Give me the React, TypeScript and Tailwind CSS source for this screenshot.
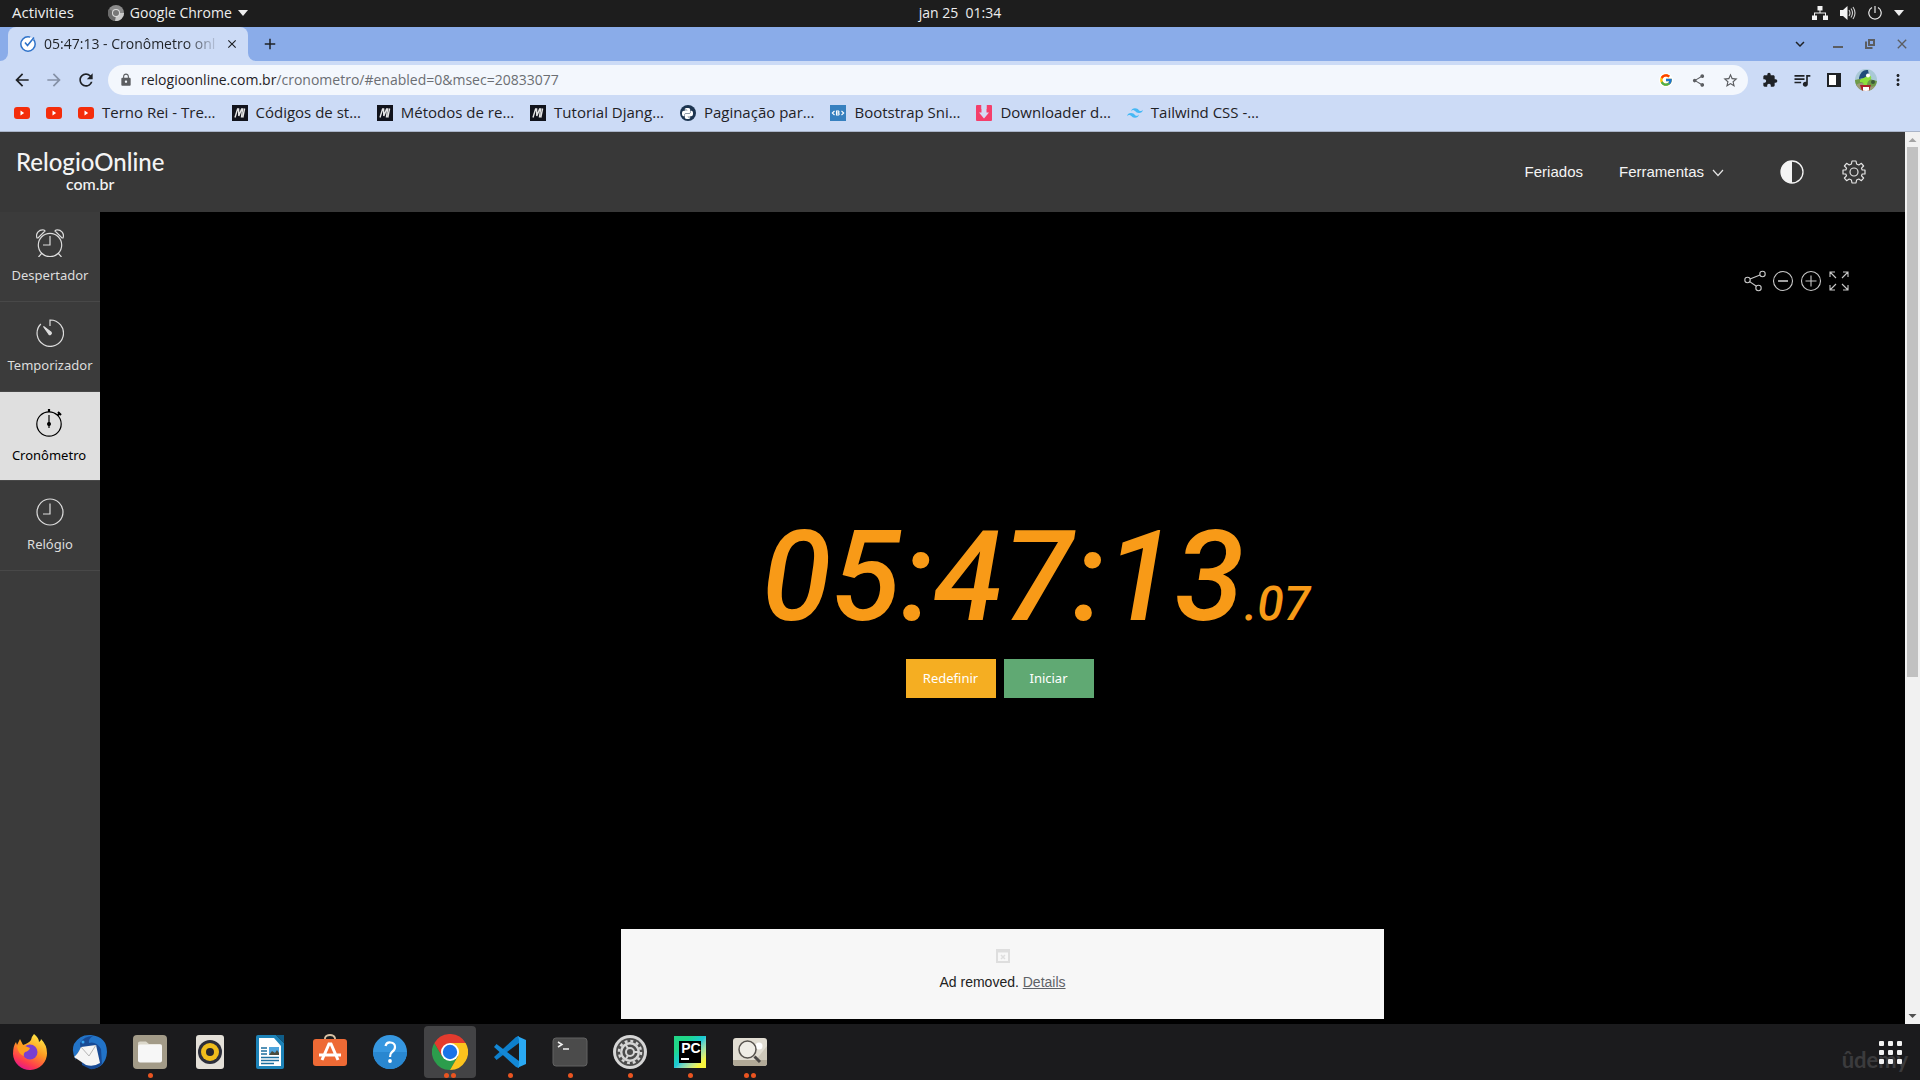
import React from 'react';
import {
  MdLock, MdExtension, MdQueueMusic, MdMoreVert, MdArrowBack, MdArrowForward, MdRefresh,
  MdClose, MdAdd, MdShare, MdStarBorder, MdExpandMore,
} from 'react-icons/md';
import { FcGoogle } from 'react-icons/fc';
import { SiTailwindcss, SiPython } from 'react-icons/si';

const YouTube = () => (
  <svg viewBox="0 0 16 16" className="size-4 shrink-0">
    <rect x="0" y="2" width="16" height="12" rx="3" fill="#f42d0b" />
    <path d="M6.5 5.6 L10.2 8 L6.5 10.4 Z" fill="#fff" />
  </svg>
);

const MIcon = () => (
  <svg viewBox="0 0 16 16" className="size-4 shrink-0">
    <rect width="16" height="16" fill="#11131c" />
    <path d="M3 12.5 L5.6 4 L6.6 4 L6.8 11 L9.6 4 L10.6 4 L9.4 12.5 M12.6 3.5 L10.8 12.5" fill="none" stroke="#e6e6e6" strokeWidth="1.4" />
  </svg>
);

const PyCircle = () => (
  <span className="flex size-4 shrink-0 items-center justify-center rounded-full bg-[#1c3450] text-[11px] text-white">
    <SiPython />
  </span>
);

const Bootsnipp = () => (
  <span className="flex size-4 shrink-0 items-center justify-center bg-[#3680bf]">
    <svg viewBox="0 0 16 16" className="size-4" fill="none" stroke="#fff" strokeWidth="1.1">
      <path d="M4.5 6 L2.300 8 L4.5 10 M11.5 6 L13.700 8 L11.5 10 M6.500 6 H8.5 Q9.600 7 8.300 8 Q10 9 8.5 10 H6.500 Z M6.500 8 H8.5" />
    </svg>
  </span>
);

const Downloader = () => (
  <svg viewBox="0 0 16 16" className="size-4 shrink-0">
    <rect width="16" height="16" rx="1" fill="#f43f6b" />
    <path d="M5.5 0 H10.5 V7.5 H13 L8 13.5 L3 7.5 H5.5 Z" fill="#d5dcf5" />
    <path d="M5.5 0 H10.5 V4 H5.5 Z" fill="#ccdbf6" />
  </svg>
);

const bookmarks: { icon: React.ReactNode; label: string }[] = [
  { icon: <YouTube />, label: '' },
  { icon: <YouTube />, label: '' },
  { icon: <YouTube />, label: 'Terno Rei - Tre…' },
  { icon: <MIcon />, label: 'Códigos de st…' },
  { icon: <MIcon />, label: 'Métodos de re…' },
  { icon: <MIcon />, label: 'Tutorial Djang…' },
  { icon: <PyCircle />, label: 'Paginação par…' },
  { icon: <Bootsnipp />, label: 'Bootstrap Sni…' },
  { icon: <Downloader />, label: 'Downloader d…' },
  { icon: <SiTailwindcss className="size-4 shrink-0 text-[#45b8f5]" />, label: 'Tailwind CSS -…' },
];

function TopBar() {
  return (
    <div className="grid h-[27px] grid-cols-[1fr_auto_1fr] items-center bg-[#1d1d1d] px-3 pb-0.5 text-[14px] text-[#eeeeee]">
      <div className="flex items-center gap-[34px]">
        <button className="text-[15px]">Activities</button>
        <button className="flex items-center gap-1.5">
          <svg viewBox="0 0 16 16" className="size-4">
            <circle cx="8" cy="8" r="8" fill="#8b8b8b" />
            <path d="M8 8 L16 8 A8 8 0 0 1 7 16 Z" fill="#c9c9c9" />
            <path d="M8 8 L1 4 A8 8 0 0 0 7 16 Z" fill="#6b6b6b" />
            <circle cx="8" cy="8" r="4" fill="#ddd" />
            <circle cx="8" cy="8" r="3" fill="#777" />
          </svg>
          Google Chrome
          <svg viewBox="0 0 10 6" className="w-[10px]"><path d="M0 0 H10 L5 6 Z" fill="#eee" /></svg>
        </button>
      </div>
      <button className="whitespace-pre">jan 25  01:34</button>
      <div className="flex items-center justify-end gap-3 pr-1">
        <svg viewBox="0 0 16 14" className="w-4" fill="#f2f2f2">
          <path d="M5.500 0 h5 v4.500 h-2 v2 h5.500 v3 h2 V14 h-5 V9.500 h2 v-2 H3 v2 h2 V14 H0 V9.500 h2 v-3 h5.500 v-2 h-2 Z" />
        </svg>
        <svg viewBox="0 0 16 14" className="w-4">
          <path d="M0 4 h3 L7.500 0 V14 L3 10 H0 Z" fill="#f2f2f2" />
          <path d="M9 4 Q11 7 9 10 M11 2.500 Q14 7 11 11.500 M13 1 Q17 7 13 13" fill="none" stroke="#d0d0d0" strokeWidth="1.100" />
        </svg>
        <svg viewBox="0 0 14 14" className="w-3.5" fill="none" stroke="#e8e8e8" strokeWidth="1.200">
          <path d="M7 0 V7 M4 1.500 A6.200 6.200 0 1 0 10 1.500" />
        </svg>
        <svg viewBox="0 0 10 6" className="w-[10px]"><path d="M0 0 H10 L5 6 Z" fill="#eee" /></svg>
      </div>
    </div>
  );
}

function TabStrip() {
  return (
    <div className="flex h-[34px] items-center bg-[#8aace9] text-[#1f2226]">
      <div className="h-full w-2 bg-[#ccdbf6]"><div className="h-full rounded-br-lg bg-[#8aace9]" /></div>
      <div className="flex h-full w-60 items-center rounded-t-lg bg-[#ccdbf6] pr-2 pl-3">
        <svg viewBox="0 0 16 16" className="size-4 shrink-0">
          <circle cx="8" cy="8" r="7.200" fill="#fff" stroke="#2e72c9" strokeWidth="1.500" strokeDasharray="36 4" />
          <path d="M5 6.500 L7.500 9.500 L14 1.500" fill="none" stroke="#2e72c9" strokeWidth="1.600" />
        </svg>
        <span className="ml-2 flex-1 overflow-hidden mask-r-from-80% mask-r-to-100% pb-0.5 text-[14px] whitespace-nowrap">
          05:47:13 - Cronômetro onl
        </span>
        <button aria-label="Fechar guia" className="ml-1 flex size-4 items-center justify-center"><MdClose className="size-3.5" /></button>
      </div>
      <div className="h-full w-2 bg-[#ccdbf6]"><div className="h-full rounded-bl-lg bg-[#8aace9]" /></div>
      <button aria-label="Nova guia" className="ml-1 flex size-5 items-center justify-center"><MdAdd className="size-[18px]" /></button>
      <div className="ml-auto flex items-center pr-0.5 text-[#5b5d61]">
        <button aria-label="Pesquisar guias" className="mr-1.5 flex w-8 justify-center"><MdExpandMore className="size-[18px] text-[#1f2226]" /></button>
        <button aria-label="Minimizar" className="flex h-4 w-8 items-end justify-center pb-1"><span className="mt-2 h-0.5 w-2.5 bg-[#5b5d61]" /></button>
        <button aria-label="Restaurar" className="flex w-8 justify-center">
          <svg viewBox="0 0 10 10" className="size-2.5" fill="none" stroke="#5b5d61" strokeWidth="2"><path d="M4 1 H9 V6 H4 Z M1 2.500 V9 H7.500" /></svg>
        </button>
        <button aria-label="Fechar" className="flex w-8 justify-center"><MdClose className="size-4" /></button>
      </div>
    </div>
  );
}

function Avatar() {
  return (
    <svg viewBox="0 0 22 22" className="size-[22px] overflow-hidden rounded-full">
      <rect width="22" height="22" fill="#a9c9d6" />
      <path d="M0 11 Q10 8 22 12 V22 H0 Z" fill="#6f9a48" />
      <path d="M1 16 Q6 12 12 16 T22 15 V22 H0 Z" fill="#9c9a78" />
      <path d="M5 11 Q9 7 14 6 Q17 7 16 10 Q12 12 12 16 L8 17 Q10 13 5 13 Z" fill="#8ce03c" />
      <path d="M4 9 Q6 0 13 1 L14 6 Q10 9 4 10 Z" fill="#1f4c7a" />
      <circle cx="13" cy="6.500" r="2" fill="#fff" />
      <circle cx="18" cy="13" r="2" fill="#3c5a3a" />
      <path d="M5 16 h11 l-2 6 h-7 Z" fill="#a9202b" />
      <path d="M8 18 h6 v4 h-6 Z" fill="#fff" />
    </svg>
  );
}

function Toolbar() {
  return (
    <div className="flex h-[34px] items-end bg-[#ccdbf6] pr-1.5 text-[#1f2226]">
      <div className="flex h-[30px] w-full items-center">
        <div className="flex w-[108px] items-center gap-3 pl-3">
          <button aria-label="Voltar"><MdArrowBack className="size-5" /></button>
          <button aria-label="Avançar"><MdArrowForward className="size-5 text-[#8591a6]" /></button>
          <button aria-label="Recarregar"><MdRefresh className="size-5" /></button>
        </div>
        <div className="flex h-[30px] flex-1 items-center rounded-full bg-[#f3f7fd] pr-0.5 pl-[11px] text-[#5b5d61]">
          <MdLock className="size-3.5" />
          <button className="ml-2 flex-1 pb-0.5 text-left text-[14px] whitespace-nowrap text-[#6b6e73]" aria-label="Endereço">
            <span className="text-[#1f2226]">relogioonline.com.br</span>/cronometro/#enabled=0&amp;msec=20833077
          </button>
          <div className="flex items-center">
            <button aria-label="Google" className="flex w-8 justify-center"><span className="rounded-full bg-white"><FcGoogle className="size-3.5" /></span></button>
            <button aria-label="Compartilhar" className="flex w-8 justify-center"><MdShare className="size-[15px]" /></button>
            <button aria-label="Favoritar" className="flex w-8 justify-center"><MdStarBorder className="size-[17px]" /></button>
          </div>
        </div>
        <div className="flex items-center pl-1.5">
          <button aria-label="Extensões" className="flex w-8 justify-center"><MdExtension className="size-4" /></button>
          <button aria-label="Mídia" className="flex w-8 justify-center"><MdQueueMusic className="size-5" /></button>
          <button aria-label="Painel lateral" className="flex w-8 justify-center">
            <svg viewBox="0 0 14 14" className="size-3.5"><path d="M1 1 H13 V13 H1 Z" fill="#fff" stroke="#1f2226" strokeWidth="2" /><path d="M9 1 H13 V13 H9 Z" fill="#1f2226" /></svg>
          </button>
          <button aria-label="Perfil" className="flex w-8 justify-center"><Avatar /></button>
          <button aria-label="Menu" className="flex w-8 justify-center"><MdMoreVert className="size-[18px]" /></button>
        </div>
      </div>
    </div>
  );
}

function Bookmarks() {
  return (
    <nav className="flex h-[37px] items-center gap-4 border-b border-[#a9b4c8] bg-[#ccdbf6] pl-3.5 text-[15px] text-[#1f2226]">
      {bookmarks.map((b, i) => (
        <a key={i} href="#" aria-label={b.label || 'YouTube'} className="flex items-center gap-2 whitespace-nowrap">
          {b.icon}
          {b.label && <span className="pb-0.5">{b.label}</span>}
        </a>
      ))}
    </nav>
  );
}

function SiteHeader() {
  return (
    <header className="flex h-20 items-center justify-between bg-[#383838] pr-[39px] pl-4 text-[#f4f4f4]">
      <a href="#" className="flex flex-col items-center font-['Lato'] font-medium">
        <span className="text-[24px] leading-6">RelogioOnline</span>
        <span className="text-[16px] leading-5">com.br</span>
      </a>
      <nav className="flex items-center font-['Liberation_Sans'] text-[15px]">
        <a href="#">Feriados</a>
        <a href="#" className="ml-9 flex items-center gap-2">
          Ferramentas
          <svg viewBox="0 0 12 12" className="size-3" fill="none" stroke="#e4e4e4" strokeWidth="1.200"><path d="M1 4 L6 9.500 L11 4" /></svg>
        </a>
        <button aria-label="Contraste" className="ml-[56px]">
          <svg viewBox="0 0 24 24" className="size-6"><circle cx="12" cy="12" r="11" fill="none" stroke="#f4f4f4" strokeWidth="1.300" /><path d="M12 1 A11 11 0 0 0 12 23 Z" fill="#f4f4f4" /></svg>
        </button>
        <button aria-label="Configurações" className="ml-[38px]">
          <svg viewBox="0 0 24 24" className="size-6" fill="none" stroke="#e4e4e4" strokeWidth="1.200" strokeLinejoin="round">
            <path d="M10 1 H14 L14.600 4 L16.800 5 L19.400 3.300 L21.600 6 L19.500 8.200 L20.200 10 H23 V14 H20.200 L19.500 15.800 L21.600 18 L19.400 20.700 L16.800 19 L14.600 20 L14 23 H10 L9.400 20 L7.200 19 L4.600 20.700 L2.400 18 L4.500 15.800 L3.800 14 H1 V10 H3.800 L4.500 8.200 L2.400 6 L4.600 3.300 L7.200 5 L9.400 4 Z" />
            <circle cx="12" cy="12" r="4" />
          </svg>
        </button>
      </nav>
    </header>
  );
}

const AlarmIcon = () => (
  <svg viewBox="0 0 28 28" className="size-7" fill="none" stroke="currentColor" strokeWidth="1.200">
    <circle cx="14" cy="16" r="11.700" />
    <path d="M14 7 V16 H7 M1 9 A6 6 0 0 1 8 1 L9 2 L2 9 Z M27 9 A6 6 0 0 0 20 1 L19 2 L26 9 Z M6 24 L2.500 28 M22 24 L25.500 28" />
  </svg>
);
const TimerIcon = () => (
  <svg viewBox="0 0 28 28" className="size-7" fill="none" stroke="currentColor" strokeWidth="1.200">
    <path d="M14 7 V1 A13.200 13.200 0 1 1 4.800 5" />
    <path d="M7.500 7.500 L12.800 15 A1.300 1.300 0 0 0 15 13.200 Z" fill="currentColor" />
  </svg>
);
const StopwatchIcon = () => (
  <svg viewBox="-1 -1 28 28" className="size-7" fill="none" stroke="currentColor" strokeWidth="1.200">
    <circle cx="13" cy="14" r="12.200" />
    <path d="M13 5 V18" />
    <circle cx="13" cy="14" r="1.400" fill="currentColor" />
    <path d="M13 -1 V2" strokeWidth="2.200" />
    <path d="M22 2 L25 5 M21.500 5.500 L23.500 3.500" strokeWidth="2" />
  </svg>
);
const ClockIcon = () => (
  <svg viewBox="0 0 28 28" className="size-7" fill="none" stroke="currentColor" strokeWidth="1.200">
    <circle cx="14" cy="14" r="13" />
    <path d="M14 5.500 V16 H7" />
  </svg>
);

const tools = [
  { label: 'Despertador', icon: <AlarmIcon />, active: false },
  { label: 'Temporizador', icon: <TimerIcon />, active: false },
  { label: 'Cronômetro', icon: <StopwatchIcon />, active: true },
  { label: 'Relógio', icon: <ClockIcon />, active: false },
];

function Sidebar() {
  return (
    <nav className="w-[100px] shrink-0 bg-[#3b3b3b] font-['Noto_Sans'] text-[13px]">
      {tools.map((t) => (
        <a
          key={t.label}
          href="#"
          className={
            t.active
              ? 'flex h-[89px] flex-col items-center gap-2 border-b border-[#484848] bg-[#dfdfdf] pt-[17px] pr-0.5 text-black'
              : 'flex h-[90px] flex-col items-center gap-2 border-b border-[#484848] pt-[17px] text-[#dddddd]'
          }
        >
          {t.icon}
          <span className="leading-5">{t.label}</span>
        </a>
      ))}
    </nav>
  );
}

function Stopwatch() {
  return (
    <main className="flex flex-1 flex-col bg-black">
      <div className="flex justify-end gap-1.5 pt-[58px] pr-[55px] text-[#c8c8c8]">
        <button aria-label="Compartilhar">
          <svg viewBox="0 0 22 22" className="size-[22px]" fill="none" stroke="currentColor" strokeWidth="1.100">
            <circle cx="3.500" cy="10" r="2.700" /><circle cx="18.500" cy="4" r="2.700" /><circle cx="14.500" cy="18" r="2.700" />
            <path d="M6 9 L16 5 M5.600 11.600 L12.400 16.200" />
          </svg>
        </button>
        <button aria-label="Diminuir">
          <svg viewBox="0 0 22 22" className="size-[22px]" fill="none" stroke="currentColor" strokeWidth="1.100"><circle cx="11" cy="11" r="9.500" /><path d="M6 11 H16" strokeWidth="1.600" /></svg>
        </button>
        <button aria-label="Aumentar">
          <svg viewBox="0 0 22 22" className="size-[22px]" fill="none" stroke="currentColor" strokeWidth="1.100"><circle cx="11" cy="11" r="9.500" /><path d="M5.500 11 H16.500 M11 5.500 V16.500" /></svg>
        </button>
        <button aria-label="Tela cheia">
          <svg viewBox="0 0 22 22" className="size-[22px]" fill="none" stroke="currentColor" strokeWidth="1.100">
            <path d="M2 7 V2 H7 M2 2 L8 8 M15 2 H20 V7 M20 2 L14 8 M2 15 V20 H7 M2 20 L8 14 M15 20 H20 V15 M20 20 L14 14" />
          </svg>
        </button>
      </div>
      <div className="mt-[210px] flex items-baseline justify-center pl-[67px] font-['Roboto'] font-medium text-[#f89a17] italic" role="timer">
        <span className="text-[126px] leading-[150px]">05:47:13</span>
        <span className="text-[48px]">.07</span>
      </div>
      <div className="mt-[7px] flex justify-center gap-2 pr-1.5 font-['Noto_Sans'] text-[13px] text-white">
        <button className="h-[39px] w-[90px] bg-[#f5ae22]">Redefinir</button>
        <button className="h-[39px] w-[90px] bg-[#60a973]">Iniciar</button>
      </div>
      <section className="mx-auto mt-auto mb-[5px] flex h-[90px] w-[763px] flex-col items-center bg-[#f7f7f7] pt-5 font-['Liberation_Sans'] text-[14px] text-[#222]">
        <svg viewBox="0 0 14 14" className="size-3.5" fill="none" stroke="#dedede">
          <path d="M1 1 H13 V13 H1 Z" strokeWidth="2" /><path d="M1 2 H13" strokeWidth="3" /><path d="M5 6 L9 10 M9 6 L5 10" strokeWidth="1.500" />
        </svg>
        <p className="mt-[9px] leading-5">Ad removed. <a href="#" className="text-[#5f6368] underline">Details</a></p>
      </section>
    </main>
  );
}

function Scrollbar() {
  return (
    <div className="flex w-[15px] shrink-0 flex-col items-center bg-[#f1f1f1]">
      <svg viewBox="0 0 15 15" className="size-[15px]"><path d="M3.500 10 L7.500 6 L11.500 10 Z" fill="#a3a3a3" /></svg>
      <div className="h-[530px] w-[11px] bg-[#c1c1c1]" />
      <svg viewBox="0 0 15 15" className="mt-auto size-[15px]"><path d="M3.500 5 L7.500 9 L11.500 5 Z" fill="#505050" /></svg>
    </div>
  );
}

const Firefox = () => (
  <svg viewBox="0 0 36 36" className="size-9">
    <defs>
      <linearGradient id="ff" x1="0.800" y1="0" x2="0.300" y2="1"><stop offset="0" stopColor="#fff14a" /><stop offset="0.450" stopColor="#ff9a22" /><stop offset="0.800" stopColor="#ff3b4d" /><stop offset="1" stopColor="#e21590" /></linearGradient>
    </defs>
    <path d="M22 0 Q27 4 27 8 Q29 7 29 5 Q35 11 35 19 A17 16.500 0 0 1 1 20 Q1 12 4 8 L5 11 L8 5 L11 11 Q17 9 19 6 Q20 2 22 0 Z" fill="url(#ff)" />
    <circle cx="18" cy="18" r="7.500" fill="#7a3fd0" />
    <path d="M5 12 Q10 9 13 12 L18 14 Q17 17 13 18 Q11 20 12 22 Q6 20 5 12 Z" fill="#ff9d1f" />
  </svg>
);
const Thunderbird = () => (
  <svg viewBox="0 0 36 36" className="size-9">
    <path d="M2 10 Q8 0 19 1 Q35 3 35 18 Q34 33 20 35 Q32 26 27 13 L8 16 Q4 20 4 26 Q-1 18 2 10 Z" fill="#2273c7" />
    <path d="M8 9 Q12 2 21 2 Q16 5 17 9 Q24 7 29 15 L30 30 Q24 36 18 35 L10 31 Z" fill="#174a95" />
    <path d="M9 13 L24 11 L28 29 Q22 33 14 31 L2 23 Q6 20 9 13 Z" fill="#f5f5f5" />
    <path d="M9 13 L17 22 L24 11" fill="none" stroke="#b5b5b5" />
    <circle cx="11" cy="8" r="1.500" fill="#35a4f0" />
  </svg>
);
const Files = () => (
  <svg viewBox="0 0 36 36" className="size-9">
    <rect x="1" y="1" width="34" height="34" rx="4" fill="#a39b88" />
    <path d="M6 9 Q6 7.500 8 7.500 H14 L17 10 H28 Q30 10 30 12 V20 H6 Z" fill="#dcd8cb" />
    <rect x="6" y="10.500" width="24" height="18" rx="2" fill="#f7f7f7" />
  </svg>
);
const Rhythmbox = () => (
  <svg viewBox="0 0 36 36" className="size-9">
    <rect x="4" y="1" width="28" height="34" rx="3" fill="#e4e0d8" />
    <circle cx="18" cy="18" r="12" fill="#2c2e3a" /><circle cx="18" cy="18" r="9" fill="#f0bd1c" /><circle cx="18" cy="18" r="4" fill="#26262c" />
  </svg>
);
const Writer = () => (
  <svg viewBox="0 0 36 36" className="size-9">
    <path d="M6 1 H24 L32 9 V33 Q32 35 30 35 H6 Q4 35 4 33 V3 Q4 1 6 1 Z" fill="#1d83b8" />
    <path d="M7 4 H22 L29 12 V32 H7 Z" fill="#fff" /><path d="M24 1 H32 V9 Z" fill="#0f5d88" />
    <path d="M9 14 H15 M9 17 H15 M9 20 H15 M9 23.500 H27 M9 26.500 H27 M9 29.500 H22" stroke="#1d6f9f" strokeWidth="1.400" />
    <rect x="17" y="13" width="10" height="8" fill="#4fa5dd" /><path d="M17 21 L20 17 L23 19 L25 16 L27 19 V21 Z" fill="#4b4b3c" />
  </svg>
);
const Software = () => (
  <svg viewBox="0 0 36 36" className="size-9">
    <path d="M13 6 V4 Q14 1 18 1 T23 4 V6" fill="none" stroke="#d8c2a4" strokeWidth="1.800" />
    <rect x="1" y="5" width="34" height="27" rx="3" fill="#ee6a35" />
    <path d="M10 26 L17 10 H19 L26 26 M7 21 H29" fill="none" stroke="#fff" strokeWidth="3" />
  </svg>
);
const Help = () => (
  <svg viewBox="0 0 36 36" className="size-9">
    <circle cx="18" cy="18" r="17" fill="#3697e0" /><path d="M1 18 A17 17 0 0 0 35 18 Z" fill="#2987d0" />
    <path d="M13.500 12 Q14.500 8 18.500 8.500 Q23 9 23 13 Q23 16 20 18 Q18 19.500 18 23" fill="none" stroke="#fff" strokeWidth="2.200" /><circle cx="18" cy="27" r="1.900" fill="#fff" />
  </svg>
);
const Chrome = () => (
  <svg viewBox="0 0 36 36" className="size-9">
    <path d="M18 36 A18 18 0 0 1 2.400 9 L10.200 22.500 L18 24 L25.800 22.500 Z" fill="#2c9d4c" />
    <path d="M18 9 H33.600 A18 18 0 0 1 18 36 L25.800 22.500 Z" fill="#fcc31e" />
    <path d="M2.400 9 A18 18 0 0 1 33.600 9 H18 L10.200 22.500 Z" fill="#e33b2e" />
    <circle cx="18" cy="18" r="9" fill="#fff" /><circle cx="18" cy="18" r="7.200" fill="#1a73e8" />
  </svg>
);
const VSCode = () => (
  <svg viewBox="0 0 36 36" className="size-9">
    <path d="M2 23 L4.500 26 L27 9 V2 L24 3 L2 23 Z" fill="#0d7fcb" />
    <path d="M2 13 L4.500 10 L27 27 V34 L24 33 Z" fill="#1388d6" />
    <path d="M25 2 L34 6 V30 L25 34 Q27 33 27 30 V6 Q27 3 25 2 Z" fill="#2aa9f3" />
  </svg>
);
const Terminal = () => (
  <svg viewBox="0 0 36 36" className="size-9">
    <rect x="1" y="4" width="34" height="28" rx="3" fill="#4b4b4b" stroke="#626262" />
    <path d="M6 8 L10 10.500 L6 13 M11 15 H17" fill="none" stroke="#f2f2f2" strokeWidth="1.500" />
  </svg>
);
const Settings = () => (
  <svg viewBox="0 0 36 36" className="size-9">
    <circle cx="18" cy="18" r="17" fill="#d6d6d6" /><circle cx="18" cy="18" r="14" fill="#4c4c4c" />
    <circle cx="18" cy="18" r="11" fill="none" stroke="#d6d6d6" strokeWidth="2.500" strokeDasharray="2.900 2.860" />
    <circle cx="18" cy="18" r="8.800" fill="none" stroke="#d6d6d6" strokeWidth="2.400" />
    <circle cx="18" cy="18" r="4" fill="none" stroke="#d6d6d6" strokeWidth="2" />
    <path d="M22 18 H27 M16 21.500 L13.500 25.800 M16 14.500 L13.500 10.200" stroke="#d6d6d6" strokeWidth="2" />
  </svg>
);
const PyCharm = () => (
  <span className="flex size-8 items-center justify-center bg-linear-to-tl from-[#f8f53e] from-15% via-[#1fc9d8] via-50% to-[#21d789] to-75%">
    <span className="flex size-[22px] flex-col bg-black pl-0.5 font-['Liberation_Sans'] text-[14px] leading-[15px] font-bold text-white">
      PC
      <span className="mt-0.5 h-0.5 w-2 bg-white" />
    </span>
  </span>
);
const ImageViewer = () => (
  <svg viewBox="0 0 36 36" className="size-9">
    <rect x="1" y="4" width="34" height="28" rx="3" fill="#e1ddd2" /><path d="M1 26 H35 V29 Q35 32 32 32 H4 Q1 32 1 29 Z" fill="#b1a997" />
    <circle cx="27" cy="12" r="3.500" fill="#fff" /><path d="M35 12 L24 26 H35 Z" fill="#cdc8ba" />
    <circle cx="15.500" cy="15.500" r="8.500" fill="#efede6" stroke="#57534e" strokeWidth="1.500" /><path d="M22.500 22.500 L28 28" stroke="#4a4745" strokeWidth="3" />
  </svg>
);

const dock = [
  { name: 'Firefox', icon: <Firefox />, dots: 0 },
  { name: 'Thunderbird', icon: <Thunderbird />, dots: 0 },
  { name: 'Files', icon: <Files />, dots: 1 },
  { name: 'Rhythmbox', icon: <Rhythmbox />, dots: 0 },
  { name: 'LibreOffice Writer', icon: <Writer />, dots: 0 },
  { name: 'Ubuntu Software', icon: <Software />, dots: 0 },
  { name: 'Help', icon: <Help />, dots: 0 },
  { name: 'Google Chrome', icon: <Chrome />, dots: 2 },
  { name: 'Visual Studio Code', icon: <VSCode />, dots: 1 },
  { name: 'Terminal', icon: <Terminal />, dots: 1 },
  { name: 'Settings', icon: <Settings />, dots: 1 },
  { name: 'PyCharm', icon: <PyCharm />, dots: 1 },
  { name: 'Image Viewer', icon: <ImageViewer />, dots: 2 },
];

function Dock() {
  return (
    <div className="flex h-14 items-center justify-between bg-[#1b1b1d] pr-[18px] pl-1">
      <div className="flex gap-2">
        {dock.map((d) => (
          <button
            key={d.name}
            aria-label={d.name}
            className={
              d.name === 'Google Chrome'
                ? 'relative flex size-[52px] items-center justify-center rounded bg-[#434345]'
                : 'relative flex size-[52px] items-center justify-center rounded'
            }
          >
            {d.icon}
            <span className="absolute inset-x-0 bottom-0 flex justify-center gap-0.5">
              {Array.from({ length: d.dots }, (_, i) => (
                <span key={i} className="size-[5px] rounded-full bg-[#e95420]" />
              ))}
            </span>
          </button>
        ))}
      </div>
      <div className="relative">
        <span className="absolute -right-1.5 -bottom-3 font-['Lato'] text-[22px] leading-8 font-bold text-[#3b3b3d]">ûdemy</span>
        <button aria-label="Show Applications" className="relative grid grid-cols-3 gap-1">
          {Array.from({ length: 9 }, (_, i) => (
            <span key={i} className="size-[5px] rounded-[1px] bg-[#f2f2f2]" />
          ))}
        </button>
      </div>
    </div>
  );
}

export default function App() {
  return (
    <div className="flex min-h-screen flex-col font-['Open_Sans',sans-serif]">
      <TopBar />
      <TabStrip />
      <Toolbar />
      <Bookmarks />
      <div className="flex flex-1">
        <div className="flex flex-1 flex-col">
          <SiteHeader />
          <div className="flex flex-1">
            <Sidebar />
            <Stopwatch />
          </div>
        </div>
        <Scrollbar />
      </div>
      <Dock />
    </div>
  );
}
